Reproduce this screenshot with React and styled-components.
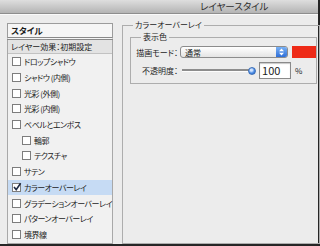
import styled, { createGlobalStyle } from "styled-components";

const Global = createGlobalStyle`
  body {
    margin: 0;
    background: #262626;
    font-family: "Noto Sans CJK JP", "Noto Sans", sans-serif;
  }
`

const Frame = styled.div`
  width: 320px;
  height: 246px;
  overflow: hidden;
  background: #262626;
`

const Window = styled.div`
  width: 318px;
  height: 244px;
  background: #ececec;
  display: flex;
  flex-direction: column;
  color: #1c1c1c;
  font-feature-settings: "palt";
`

const TitleBar = styled.div`
  height: 13px;
  flex: none;
  background: linear-gradient(#dedede, #b4b4b4);
  border-bottom: 1px solid #8e8e8e;
  box-shadow: 0 1px 0 #fafafa;
  font-size: 9.5px;
  line-height: 13px;
  color: #2d2d2d;
  padding-left: 200px;
  white-space: nowrap;
`

const Body = styled.div`
  flex: 1;
  min-height: 0;
  display: flex;
  padding: 5px 2px 0 7px;
`

const LeftCol = styled.div`
  width: 109px;
  margin-top: 4px;
  display: flex;
  flex-direction: column;
  min-height: 0;
`

const StyleHeader = styled.div`
  height: 13px;
  flex: none;
  border: 1px solid #9c9c9c;
  border-bottom: 3px double #8a8a8a;
  background: #f6f6f6;
  font-size: 8.5px;
  font-weight: 700;
  line-height: 13px;
  padding-left: 3px;
`

const List = styled.div`
  flex: 1;
  border: 1px solid #a8a8a8;
  border-top: none;
  background: #f1f1f1;
`

const PresetRow = styled.div`
  height: 13px;
  background: #e3e3e3;
  border-bottom: 1px solid #c2c2c2;
  font-size: 8px;
  line-height: 13px;
  padding-left: 3px;
  white-space: nowrap;
`

const Item = styled.div`
  height: 15.7px;
  display: flex;
  align-items: center;
  gap: 2px;
  padding-left: ${p => (p.$indent ? 14 : 4)}px;
  background: ${p => (p.$selected ? "#c6dbf4" : "transparent")};
  font-size: 8px;
  letter-spacing: -0.5px;
  white-space: nowrap;
`

const Box = styled.span`
  width: 7px;
  height: 7px;
  flex: none;
  border: 1px solid #7d7d7d;
  background: #fff;
  position: relative;
  margin-right: 1px;
`

const Check = styled.svg`
  position: absolute;
  left: -1px;
  top: -2px;
`

const RightCol = styled.div`
  flex: 1;
  margin-left: 9px;
  display: flex;
  flex-direction: column;
`

const Group = styled.fieldset`
  margin: 0;
  border: 1px solid #adadad;
  padding: ${p => p.$pad};
  min-width: 0;
  ${p => p.$fill && "flex: 1;"}
`

const Legend = styled.legend`
  font-size: 8px;
  line-height: 12px;
  padding: 0 2px;
  margin-left: ${p => p.$offset}px;
  white-space: nowrap;
`

const Row = styled.div`
  display: flex;
  align-items: center;
  height: ${p => p.$h}px;
  margin-top: ${p => p.$top}px;
`

const Label = styled.span`
  width: 44px;
  flex: none;
  text-align: right;
  font-size: 8px;
  white-space: nowrap;
`

const Select = styled.div`
  width: 102px;
  height: 10px;
  margin-left: 2px;
  border: 1px solid #8c8c8c;
  border-radius: 3px;
  background: linear-gradient(#ffffff, #e4e4e4);
  display: flex;
  align-items: center;
  justify-content: space-between;
  font-size: 8px;
  padding-left: 4px;
  overflow: hidden;
  flex: none;
`

const Stepper = styled.span`
  width: 11px;
  height: 10px;
  background: linear-gradient(#79b1f5, #2f6fd8);
  display: flex;
  align-items: center;
  justify-content: center;
`

const Swatch = styled.div`
  width: 24px;
  height: 12px;
  margin-left: 4px;
  flex: none;
  background: #ee2a17;
`

const Slider = styled.div`
  width: 72px;
  height: 10px;
  margin-left: 4px;
  flex: none;
  display: flex;
  align-items: center;
  position: relative;
`

const Track = styled.div`
  flex: 1;
  height: 2px;
  background: #8d8d8d;
  border-bottom: 1px solid #fdfdfd;
`

const Thumb = styled.span`
  position: absolute;
  left: 66px;
  top: 1px;
  width: 8px;
  height: 8px;
  border-radius: 50%;
  background: radial-gradient(circle at 40% 35%, #cfe3ff 0 20%, #4a8ce6 55%, #2a63c4);
  border: 1px solid #3c6fb8;
  box-sizing: border-box;
`

const Field = styled.div`
  width: 28px;
  height: 15px;
  margin-left: 5px;
  flex: none;
  border: 1px solid #8a8a8a;
  background: #fff;
  box-shadow: inset 0 1px 1px #c8c8c8;
  font-size: 11px;
  line-height: 15px;
  padding-left: 2px;
`

const Unit = styled.span`
  margin-left: 4px;
  font-size: 8px;
`

const effects = [
  { name: "ドロップシャドウ" },
  { name: "シャドウ (内側)" },
  { name: "光彩 (外側)" },
  { name: "光彩 (内側)" },
  { name: "ベベルとエンボス" },
  { name: "輪郭", indent: true },
  { name: "テクスチャ", indent: true },
  { name: "サテン" },
  { name: "カラーオーバーレイ", checked: true },
  { name: "グラデーションオーバーレイ" },
  { name: "パターンオーバーレイ" },
  { name: "境界線" },
];

function CheckBox({ checked }) {
  return (
    <Box>
      {checked && (
        <Check width="10" height="10" viewBox="0 0 10 10">
          <path d="M2 5 L4.2 7.6 L8.6 1.2" fill="none" stroke="#1d2a44" strokeWidth="1.6" />
        </Check>
      )}
    </Box>
  );
}

export default function App() {
  return (
    <Frame>
      <Global />
      <Window>
        <TitleBar>レイヤースタイル</TitleBar>
        <Body>
          <LeftCol>
            <StyleHeader>スタイル</StyleHeader>
            <List>
              <PresetRow>レイヤー効果：初期設定</PresetRow>
              {effects.map(e => (
                <Item key={e.name} $indent={e.indent} $selected={e.checked}>
                  <CheckBox checked={e.checked} />
                  {e.name}
                </Item>
              ))}
            </List>
          </LeftCol>
          <RightCol>
            <Group $pad="0 2px 0 7px" $fill>
              <Legend $offset={3}>カラーオーバーレイ</Legend>
              <Group $pad="0 0 4px 3px">
                <Legend $offset={7}>表示色</Legend>
                <Row $h={12} $top={3}>
                  <Label>描画モード：</Label>
                  <Select>
                    通常
                    <Stepper>
                      <svg width="5" height="8" viewBox="0 0 5 8">
                        <path d="M0 3.2 L2.5 0.5 L5 3.2 Z M0 4.8 L2.5 7.5 L5 4.8 Z" fill="#fff" />
                      </svg>
                    </Stepper>
                  </Select>
                  <Swatch />
                </Row>
                <Row $h={17} $top={4}>
                  <Label>不透明度：</Label>
                  <Slider>
                    <Track />
                    <Thumb />
                  </Slider>
                  <Field>100</Field>
                  <Unit>%</Unit>
                </Row>
              </Group>
            </Group>
          </RightCol>
        </Body>
      </Window>
    </Frame>
  );
}
